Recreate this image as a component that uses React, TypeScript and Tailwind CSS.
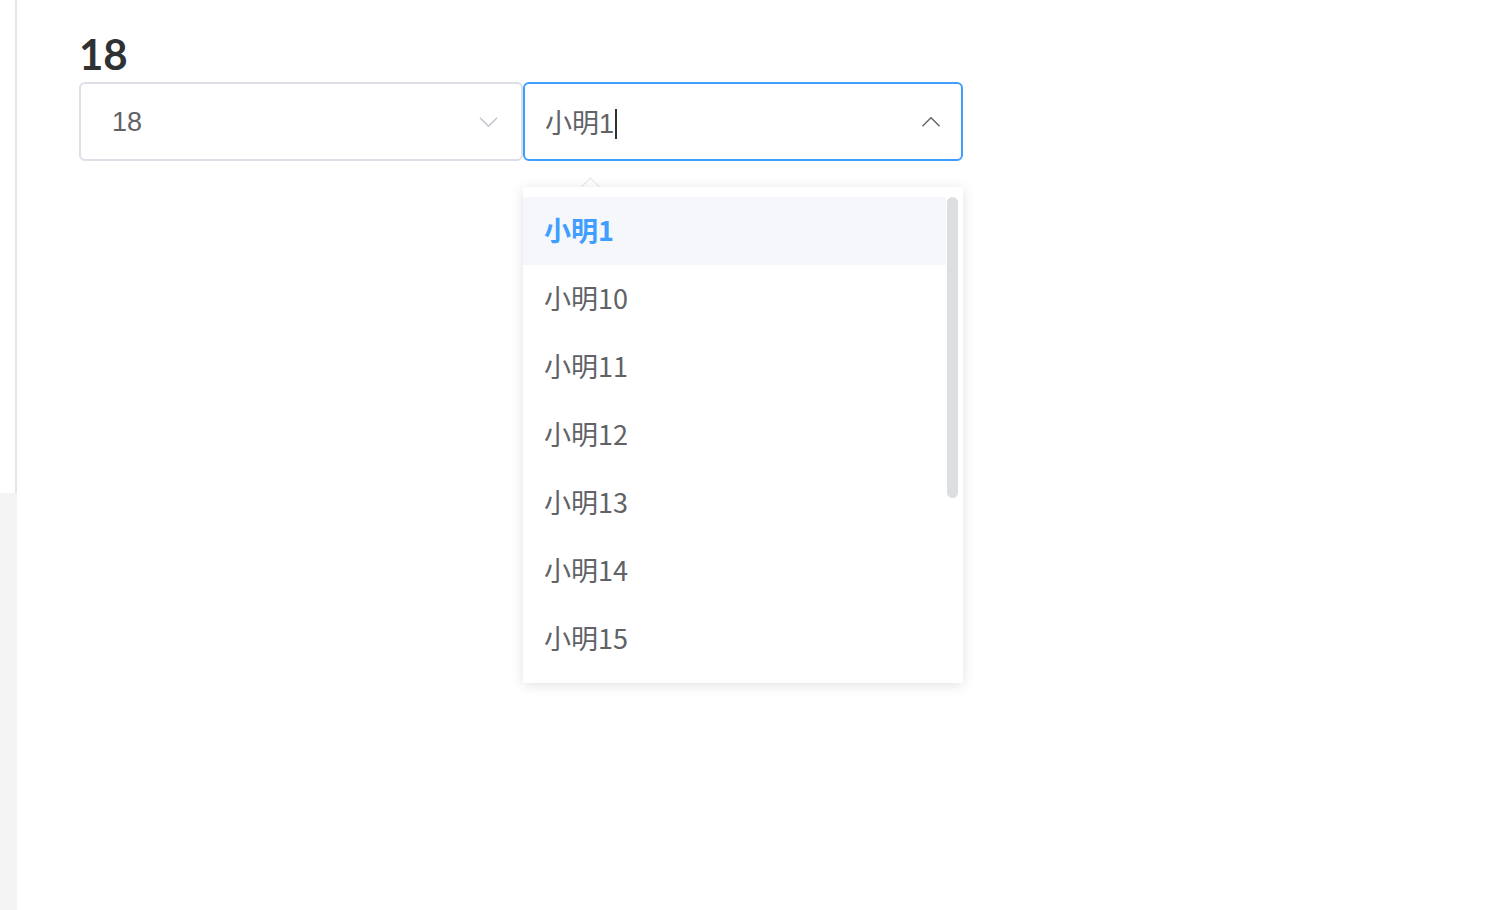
import React from "react";

const names = ["小明1", "小明10", "小明11", "小明12", "小明13", "小明14", "小明15"];

const ChevronDown = ({ className }: { className?: string }) => (
  <svg viewBox="0 0 24 14" className={className} fill="none" stroke="currentColor" strokeWidth="1.6">
    <path d="M2 2 L12 12 L22 2" />
  </svg>
);

const ChevronUp = ({ className }: { className?: string }) => (
  <svg viewBox="0 0 24 14" className={className} fill="none" stroke="currentColor" strokeWidth="1.6">
    <path d="M2 12 L12 2 L22 12" />
  </svg>
);

const App = () => {
  const [selected] = React.useState("小明1");

  return (
    <div className="flex min-h-[910px] w-full bg-white">
      <div className="flex w-[17px] flex-col">
        <div className="h-[493px] border-r-2 border-[#e6e6e6] bg-white" />
        <div className="flex-1 bg-[#f4f4f4]" />
      </div>

      <div className="flex-1 pl-[62px] pt-[27px]">
        <h1
          className="text-[42px] leading-[54px] font-bold text-[#303133]"
          style={{ fontFamily: "Lato, 'Noto Sans', sans-serif" }}
        >
          18
        </h1>

        <div className="mt-px flex">
          <div className="flex h-[79px] w-[444px] items-center justify-between rounded-[6px] border-2 border-[#dcdfe6] pl-[31px] pr-[22px]">
            <span
              className="pt-[2px] text-[27px] text-[#606266]"
              style={{ fontFamily: "'Liberation Sans', 'Noto Sans CJK SC', sans-serif" }}
            >
              18
            </span>
            <ChevronDown className="h-[12px] w-[21px] text-[#c0c4cc]" />
          </div>

          <div className="relative">
            <div className="flex h-[79px] w-[440px] items-center justify-between rounded-[6px] border-2 border-[#409eff] pl-[20px] pr-[19px]">
              <span
                className="flex items-center pt-[5px] text-[27px] text-[#606266]"
                style={{ fontFamily: "'Liberation Sans', 'Noto Sans CJK SC', sans-serif" }}
              >
                {selected}
                <span className="ml-px inline-block h-[30px] w-[2px] bg-[#303133]" />
              </span>
              <ChevronUp className="h-[12px] w-[22px] text-[#606266]" />
            </div>

            <div className="absolute left-0 top-[105px] w-[440px]">
              <div className="absolute -top-[7px] left-[61px] h-[13px] w-[13px] rotate-45 border-l border-t border-[#e4e7ed] bg-white" />
              <div className="relative flex bg-white py-[10px] shadow-[0_2px_12px_rgba(0,0,0,0.12)]">
                <ul className="flex-1" style={{ fontFamily: "'Noto Sans CJK SC', 'Noto Sans', sans-serif" }}>
                  {names.map((n) => (
                    <li
                      key={n}
                      className={
                        n === selected
                          ? "flex h-[68px] items-center bg-[#f5f7fa] pb-[2px] pl-[21px] text-[27px] font-bold text-[#409eff]"
                          : "flex h-[68px] items-center pb-[2px] pl-[21px] text-[27px] text-[#606266]"
                      }
                    >
                      {n}
                    </li>
                  ))}
                </ul>
                <div className="w-[17px] pl-px">
                  <div className="h-[301px] w-[11px] rounded-full bg-[#dddee0]" />
                </div>
              </div>
            </div>
          </div>
        </div>
      </div>
    </div>
  );
};

export default App;
